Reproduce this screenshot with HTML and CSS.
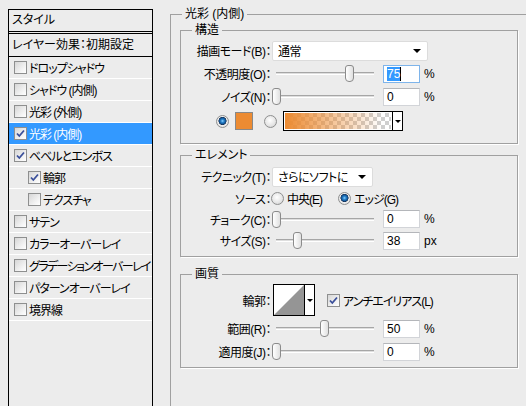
FILE: index.html
```html
<!DOCTYPE html>
<html lang="ja">
<head>
    <meta charset="UTF-8">
    <title>レイヤースタイル</title>
    <link rel="stylesheet" href="styles.css">
</head>
<body>
    <div class="dialog">
        <!-- スタイル一覧 -->
        <div class="styles-panel">
            <div class="panel-head">スタイル</div>
            <div class="panel-preset">レイヤー効果：初期設定</div>
            <ul class="effect-list">
                <li><span class="check"></span>ドロップシャドウ</li>
                <li><span class="check"></span>シャドウ (内側)</li>
                <li><span class="check"></span>光彩 (外側)</li>
                <li class="selected"><span class="check on"><svg viewBox="0 0 11 11"><path d="M2 5.5 L4.3 8 L9 2.5"/></svg></span>光彩 (内側)</li>
                <li><span class="check on"><svg viewBox="0 0 11 11"><path d="M2 5.5 L4.3 8 L9 2.5"/></svg></span>ベベルとエンボス</li>
                <li class="sub"><span class="check on"><svg viewBox="0 0 11 11"><path d="M2 5.5 L4.3 8 L9 2.5"/></svg></span>輪郭</li>
                <li class="sub"><span class="check"></span>テクスチャ</li>
                <li><span class="check"></span>サテン</li>
                <li><span class="check"></span>カラーオーバーレイ</li>
                <li class="long"><span class="check"></span>グラデーションオーバーレイ</li>
                <li><span class="check"></span>パターンオーバーレイ</li>
                <li><span class="check"></span>境界線</li>
            </ul>
        </div>

        <fieldset class="group outer">
            <legend>光彩 (内側)</legend>

            <!-- 構造 -->
            <fieldset class="group structure">
                <legend>構造</legend>
                <div class="row">
                    <span class="label">描画モード(B)：</span>
                    <div class="select mode"><span>通常</span><i class="arrow"></i></div>
                </div>
                <div class="row">
                    <span class="label">不透明度(O)：</span>
                    <div class="slider"><span class="thumb" style="left: 73px"></span></div>
                    <span class="num focused"><span class="sel">75</span></span>
                    <span class="unit">%</span>
                </div>
                <div class="row">
                    <span class="label">ノイズ(N)：</span>
                    <div class="slider"><span class="thumb" style="left: 0px"></span></div>
                    <span class="num">0</span>
                    <span class="unit">%</span>
                </div>
                <div class="row color-row">
                    <span class="radio on"></span>
                    <span class="swatch"></span>
                    <span class="radio second"></span>
                    <div class="gradient"><span class="gradient-fill"></span><span class="gradient-arrow"><i class="arrow"></i></span></div>
                </div>
            </fieldset>

            <!-- エレメント -->
            <fieldset class="group element">
                <legend>エレメント</legend>
                <div class="row">
                    <span class="label">テクニック(T)：</span>
                    <div class="select technique"><span>さらにソフトに</span><i class="arrow"></i></div>
                </div>
                <div class="row source">
                    <span class="label">ソース：</span>
                    <span class="radio"></span><span class="opt">中央(E)</span>
                    <span class="radio on second"></span><span class="opt">エッジ(G)</span>
                </div>
                <div class="row choke">
                    <span class="label">チョーク(C)：</span>
                    <div class="slider"><span class="thumb" style="left: 0px"></span></div>
                    <span class="num">0</span>
                    <span class="unit">%</span>
                </div>
                <div class="row">
                    <span class="label">サイズ(S)：</span>
                    <div class="slider"><span class="thumb" style="left: 21px"></span></div>
                    <span class="num">38</span>
                    <span class="unit">px</span>
                </div>
            </fieldset>

            <!-- 画質 -->
            <fieldset class="group quality">
                <legend>画質</legend>
                <div class="row contour-row">
                    <span class="label">輪郭：</span>
                    <div class="contour">
                        <span class="contour-swatch"><svg viewBox="0 0 30 30" preserveAspectRatio="none"><polygon points="0,30 30,0 30,30"/></svg></span>
                        <span class="contour-arrow"><i class="arrow"></i></span>
                    </div>
                    <span class="check on"><svg viewBox="0 0 11 11"><path d="M2 5.5 L4.3 8 L9 2.5"/></svg></span>
                    <span class="opt">アンチエイリアス(L)</span>
                </div>
                <div class="row">
                    <span class="label">範囲(R)：</span>
                    <div class="slider"><span class="thumb" style="left: 48px"></span></div>
                    <span class="num">50</span>
                    <span class="unit">%</span>
                </div>
                <div class="row">
                    <span class="label">適用度(J)：</span>
                    <div class="slider"><span class="thumb" style="left: 0px"></span></div>
                    <span class="num">0</span>
                    <span class="unit">%</span>
                </div>
            </fieldset>
        </fieldset>
    </div>
</body>
</html>
```

FILE: styles.css
```css
body {
    margin: 0;
    width: 526px;
    height: 406px;
    overflow: hidden;
    background-color: #ececec;
    font-family: "Liberation Sans", "Noto Sans CJK JP", sans-serif;
    font-size: 12px;
    font-feature-settings: "palt";
    color: #000;
}
.dialog {
    display: flex;
    align-items: flex-start;
}

/* left list */
.styles-panel {
    flex: none;
    width: 145px;
    height: 397px;
    margin: 9px 0 0 8px;
    box-sizing: border-box;
    border: 1px solid #000;
    border-bottom: none;
    overflow: hidden;
}
.panel-head {
    height: 21px;
    line-height: 21px;
    padding-left: 3px;
    border-bottom: 3px double #000;
}
.panel-preset {
    height: 22px;
    line-height: 22px;
    padding-left: 3px;
    border-bottom: 1px solid #000;
}
.effect-list {
    list-style: none;
    margin: 0;
    padding: 0;
}
.effect-list li {
    display: flex;
    align-items: center;
    height: 21px;
    padding-left: 5px;
    border-bottom: 1px solid #fff;
    white-space: nowrap;
    letter-spacing: -1px;
}
.effect-list li.long { letter-spacing: -1.6px; }
.effect-list li.sub { padding-left: 19px; }
.effect-list li.selected {
    background-color: #3399ff;
    color: #fff;
}

.check {
    flex: none;
    display: flex;
    width: 13px;
    height: 13px;
    margin-right: 2px;
    box-sizing: border-box;
    border: 1px solid #8e8f8f;
    background: linear-gradient(135deg, #d6d6d6, #f4f4f4 70%, #fff);
}
.check svg {
    width: 11px;
    height: 11px;
}
.check path {
    fill: none;
    stroke: #3a4f9a;
    stroke-width: 1.8;
}

/* groups */
.group {
    margin: 0;
    padding: 0;
    min-width: 0;
    box-sizing: border-box;
    border: 1px solid #a0a0a0;
    box-shadow: 1px 1px 0 #fff;
}
.group legend {
    padding: 0 3px;
    margin-left: 11px;
    line-height: 14px;
}
.outer {
    flex: none;
    width: 380px;
    height: 399px;
    margin: 7px 0 0 17px;
    padding: 2px 0 0 9px;
    border-bottom: none;
    box-shadow: none;
}
.outer > legend { margin-left: 2px; }
.structure {
    width: 338px;
    padding-top: 2px;
    padding-bottom: 9px;
}
.element {
    width: 338px;
    margin-top: 4px;
    padding-top: 3px;
    padding-bottom: 4px;
}
.quality {
    width: 338px;
    margin-top: 10px;
    padding-top: 2px;
    padding-bottom: 4px;
}

.row {
    display: flex;
    align-items: center;
    height: 23px;
    white-space: nowrap;
}
.label {
    flex: none;
    width: 90px;
    text-align: right;
    letter-spacing: -0.5px;
}
.row.source { height: 21px; }
.row.choke { height: 20px; }
.row.contour-row { height: 34px; }

/* controls */
.select {
    display: flex;
    align-items: center;
    justify-content: space-between;
    height: 20px;
    margin-left: 1px;
    padding: 0 6px 0 5px;
    box-sizing: border-box;
    background-color: #fff;
    border: 1px solid #dcdcdc;
    border-radius: 2px;
    letter-spacing: -0.5px;
}
.select.mode { width: 156px; }
.select.technique { width: 101px; }
.arrow {
    display: block;
    width: 0;
    height: 0;
    border-top: 4px solid #000;
    border-left: 4px solid transparent;
    border-right: 4px solid transparent;
}

.slider {
    position: relative;
    flex: none;
    width: 106px;
    height: 17px;
    margin-left: 1px;
}
.slider::before {
    content: "";
    position: absolute;
    left: 4px;
    right: 4px;
    top: 7px;
    height: 1px;
    background-color: #dedede;
    border-top: 1px solid #a6a6a6;
    border-bottom: 1px solid #fff;
}
.thumb {
    position: absolute;
    top: 0;
    width: 9px;
    height: 17px;
    box-sizing: border-box;
    border: 1px solid #8b8b8b;
    border-radius: 3px 3px 4px 4px;
    background: linear-gradient(to right, #fff, #e0e0e0);
}

.num {
    flex: none;
    width: 37px;
    height: 18px;
    margin-left: 5px;
    padding-left: 3px;
    box-sizing: border-box;
    line-height: 16px;
    background-color: #fff;
    border: 1px solid #d2d4d8;
    border-top-color: #b4b6ba;
}
.num.focused { border-color: #7eb4ea; }
.sel {
    background-color: #3399ff;
    color: #fff;
    border-right: 1px solid #000;
}
.unit { margin-left: 4px; }

.radio {
    flex: none;
    width: 13px;
    height: 13px;
    box-sizing: border-box;
    border-radius: 50%;
    border: 1px solid #8e8f8f;
    background: radial-gradient(circle at 45% 40%, #fff, #e4e4e4 60%, #c4c4c4);
}
.radio.on {
    background: radial-gradient(circle at 50% 45%, #8fd4ff 0, #2a86d0 1.5px, #0f4f8e 3.2px, #1a3050 3.8px, #f0f0f0 4.3px, #d0d0d0 100%);
}
.opt {
    margin-left: 3px;
    letter-spacing: -1px;
}
.source .second { margin-left: 16px; }

.color-row {
    height: 26px;
    padding-left: 35px;
}
.swatch {
    flex: none;
    width: 18px;
    height: 18px;
    margin-left: 6px;
    box-sizing: border-box;
    border: 1px solid #888;
    background-color: #ec8b32;
}
.color-row .second { margin-left: 11px; }
.gradient {
    display: flex;
    width: 120px;
    height: 20px;
    margin-left: 6px;
    box-sizing: border-box;
    border: 1px solid #000;
}
.gradient-fill {
    flex: 1;
    border: 1px solid #fff;
    background:
        linear-gradient(to right, #ec8b32, rgba(236, 139, 50, 0.45) 50%, rgba(236, 139, 50, 0) 92%),
        conic-gradient(#cfcfcf 25%, #fff 0 50%, #cfcfcf 0 75%, #fff 0) 0 0 / 8px 8px;
}
.gradient-arrow,
.contour-arrow {
    display: flex;
    align-items: center;
    justify-content: center;
    width: 9px;
    border-left: 1px solid #000;
    background-color: #fff;
}
.gradient-arrow .arrow,
.contour-arrow .arrow {
    border-top-width: 3px;
    border-left-width: 3px;
    border-right-width: 3px;
}

.contour {
    display: flex;
    width: 42px;
    height: 32px;
    margin-left: 2px;
    box-sizing: border-box;
    border: 1px solid #000;
}
.contour-swatch {
    flex: 1;
    display: flex;
    background-color: #fff;
}
.contour-swatch svg {
    width: 100%;
    height: 100%;
}
.contour-swatch polygon { fill: #959595; }
.contour-row .check {
    margin-left: 12px;
    margin-right: 0;
}
```
